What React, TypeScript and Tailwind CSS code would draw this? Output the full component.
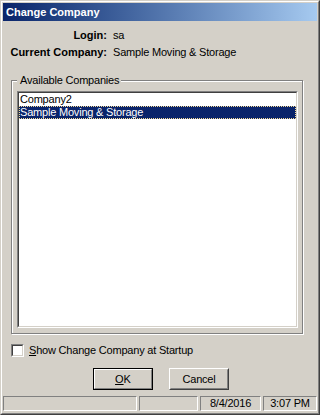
import React from "react";

const font = "font-['Liberation_Sans',Arial,sans-serif]";

function Panel({ w, children }: { w: string; children?: React.ReactNode }) {
  return (
    <div
      className={`${w} h-[15px] border border-t-[#808080] border-l-[#808080] border-r-white border-b-white text-center leading-[13px] tracking-[-0.2px]`}
    >
      {children}
    </div>
  );
}

export default function App() {
  return (
    <div
      className={`${font} text-[11px] text-black w-[320px] h-[415px] flex flex-col bg-[#d4d0c8] border border-t-[#d4d0c8] border-l-[#d4d0c8] border-r-[#404040] border-b-[#404040]`}
    >
      <div className="flex-1 flex flex-col border border-t-white border-l-white border-r-[#808080] border-b-[#808080] p-[1px]">
        {/* Title bar */}
        <div className="h-[18px] shrink-0 flex items-center pl-[3px] bg-gradient-to-r from-[#0a246a] to-[#a6caf0]">
          <span className="text-white font-bold text-[11px] leading-[13px]">Change Company</span>
        </div>

        {/* Info */}
        <div className="mt-[8px] grid grid-cols-[104px_1fr] gap-x-[6px] gap-y-[4px] leading-[13px]">
          <div className="text-right font-bold">Login:</div>
          <div className="tracking-[-0.2px]">sa</div>
          <div className="text-right font-bold">Current Company:</div>
          <div className="tracking-[-0.2px]">Sample Moving &amp; Storage</div>
        </div>

        {/* Group box */}
        <fieldset className="mt-[15px] ml-[8px] w-[292px] border border-[#808080] shadow-[1px_1px_0_#fff,inset_1px_1px_0_#fff] pl-[5px] pr-[4px] pt-[4px] pb-[5px]">
          <legend className="bg-[#d4d0c8] pl-[3px] pr-[2px] leading-[13px] tracking-[-0.2px]">
            Available Companies
          </legend>
          <div className="h-[237px] flex flex-col border border-t-[#808080] border-l-[#808080] border-r-white border-b-white">
            <div className="flex-1 bg-white border border-t-[#404040] border-l-[#404040] border-r-[#d4d0c8] border-b-[#d4d0c8] tracking-[-0.2px]">
              <div className="h-[13px] leading-[13px] pl-[1px]">Company2</div>
              <div className="h-[13px] leading-[13px] pl-[1px] bg-[#0a246a] text-white outline outline-1 outline-dotted outline-[#f5db95] -outline-offset-1">
                Sample Moving &amp; Storage
              </div>
            </div>
          </div>
        </fieldset>

        {/* Checkbox */}
        <div className="mt-[10px] ml-[8px] h-[13px] flex items-center gap-[5px]">
          <div className="w-[13px] h-[13px] border border-t-[#808080] border-l-[#808080] border-r-white border-b-white">
            <div className="w-full h-full bg-white border border-t-[#404040] border-l-[#404040] border-r-[#d4d0c8] border-b-[#d4d0c8]" />
          </div>
          <span className="leading-[13px] tracking-[-0.2px]">
            <span className="underline underline-offset-[1px]">S</span>how Change Company at Startup
          </span>
        </div>

        {/* Buttons */}
        <div className="mt-[11px] ml-[90px] flex gap-[16px]">
          <div className="w-[60px] h-[22px] border border-black">
            <div className="w-full h-full border border-t-white border-l-white border-r-[#808080] border-b-[#808080] flex items-center justify-center leading-[13px]">
              <span>
                <span className="underline underline-offset-[1px]">O</span>K
              </span>
            </div>
          </div>
          <div className="w-[60px] h-[22px] border border-t-white border-l-white border-r-[#404040] border-b-[#404040]">
            <div className="w-full h-full border border-t-[#d4d0c8] border-l-[#d4d0c8] border-r-[#808080] border-b-[#808080] flex items-center justify-center leading-[13px] tracking-[-0.2px]">
              Cancel
            </div>
          </div>
        </div>

        {/* Status bar */}
        <div className="mt-[6px] flex gap-[2px]">
          <Panel w="w-[134px]" />
          <Panel w="w-[59px]" />
          <Panel w="w-[61px]">8/4/2016</Panel>
          <Panel w="w-[54px]">3:07 PM</Panel>
        </div>
      </div>
    </div>
  );
}
